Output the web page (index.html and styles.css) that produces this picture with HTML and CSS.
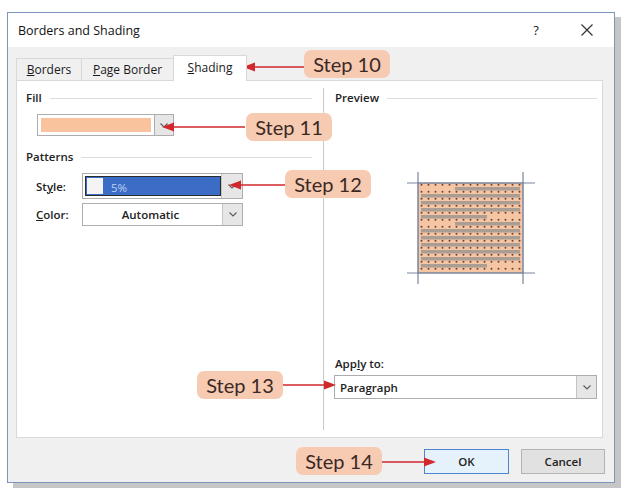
FILE: index.html
```html
<!DOCTYPE html>
<html>
<head>
<meta charset="utf-8">
<title>Borders and Shading</title>
<link rel="stylesheet" href="styles.css">
</head>
<body>
<div class="page">
  <div class="dialog">
    <div class="titlebar">
      <span class="title">Borders and Shading</span>
      <span class="help">?</span>
      <svg class="close" width="12" height="12" viewBox="0 0 12 12"><path d="M0.5 0.5 L11.5 11.5 M11.5 0.5 L0.5 11.5" stroke="#333" stroke-width="1.2" fill="none"/></svg>
    </div>
    <div class="body">
      <div class="tabs">
        <div class="tab tab-borders"><u>B</u>orders</div>
        <div class="tab tab-page"><u>P</u>age Border</div>
        <div class="tab tab-shading active"><u>S</u>hading</div>
      </div>
      <div class="panel">
        <div class="col left">
          <div class="group"><span class="glabel">Fill</span><i class="gline"></i></div>
          <div class="dd dd-fill">
            <div class="val"><span class="swatch"></span></div>
            <div class="btn"><svg width="8" height="5" viewBox="0 0 8 5"><polyline points="0.5,0.5 4,4 7.5,0.5" fill="none" stroke="#5a5a5a" stroke-width="1.1"/></svg></div>
          </div>
          <div class="group patterns"><span class="glabel">Patterns</span><i class="gline"></i></div>
          <div class="row row-style">
            <span class="lbl">St<u>y</u>le:</span>
            <div class="dd dd-style">
              <div class="val"><span class="sel"><span class="wsq"></span><span class="pct">5%</span></span></div>
              <div class="btn"><svg width="8" height="5" viewBox="0 0 8 5"><polyline points="0.5,0.5 4,4 7.5,0.5" fill="none" stroke="#5a5a5a" stroke-width="1.1"/></svg></div>
            </div>
          </div>
          <div class="row row-color">
            <span class="lbl"><u>C</u>olor:</span>
            <div class="dd dd-color">
              <div class="val center">Automatic</div>
              <div class="btn"><svg width="8" height="5" viewBox="0 0 8 5"><polyline points="0.5,0.5 4,4 7.5,0.5" fill="none" stroke="#5a5a5a" stroke-width="1.1"/></svg></div>
            </div>
          </div>
        </div>
        <div class="col right">
          <div class="group"><span class="glabel">Preview</span><i class="gline"></i></div>
          <div class="preview">
            <svg width="134" height="118" viewBox="0 0 134 118">
              <defs>
                <pattern id="dots" x="14" y="13" width="7" height="7" patternUnits="userSpaceOnUse">
                  <circle cx="3.5" cy="1.7" r="1" fill="#6a4238"/>
                </pattern>
              </defs>
              <rect x="14" y="13" width="105" height="90" fill="#f6c6a4"/>
              <rect x="14" y="13" width="105" height="90" fill="url(#dots)"/>
              <g fill="#a99d94">
                <rect x="51" y="17" width="65" height="3.5"/>
                <rect x="17" y="24" width="99" height="3.5"/>
                <rect x="17" y="31" width="99" height="3.5"/>
                <rect x="17" y="38" width="99" height="3.5"/>
                <rect x="17" y="45" width="66" height="3.5"/>
                <rect x="51" y="52" width="65" height="3.5"/>
                <rect x="17" y="59" width="99" height="3.5"/>
                <rect x="17" y="66" width="99" height="3.5"/>
                <rect x="17" y="73" width="99" height="3.5"/>
                <rect x="17" y="80" width="99" height="3.5"/>
                <rect x="17" y="87" width="99" height="3.5"/>
                <rect x="17" y="94" width="66" height="3.5"/>
              </g>
              <rect x="14" y="13" width="105" height="90" fill="none" stroke="#6f7f9b" stroke-width="1.4"/>
              <g stroke="#7a879e" stroke-width="1.2" fill="none">
                <path d="M14 2 V13 M119 2 V13 M14 103 V114 M119 103 V114"/>
                <path d="M3 13 H14 M119 13 H131 M3 103 H14 M119 103 H131"/>
              </g>
            </svg>
          </div>
          <div class="apply-label">App<u>l</u>y to:</div>
          <div class="dd dd-apply">
            <div class="val">Paragraph</div>
            <div class="btn"><svg width="8" height="5" viewBox="0 0 8 5"><polyline points="0.5,0.5 4,4 7.5,0.5" fill="none" stroke="#5a5a5a" stroke-width="1.1"/></svg></div>
          </div>
        </div>
      </div>
      <div class="footer">
        <button class="button ok">OK</button>
        <button class="button cancel">Cancel</button>
      </div>
    </div>
  </div>

  <svg class="arrows" width="638" height="495" viewBox="0 0 638 495">
    <g stroke="#d0282c" stroke-width="1.5" fill="none">
      <path d="M304 67 H252"/>
      <path d="M245 127 H172"/>
      <path d="M285 185 H239"/>
      <path d="M282 385 H326"/>
      <path d="M382 462 H426"/>
    </g>
    <g fill="#d0282c">
      <polygon points="243,67 255,62.5 255,71.5"/>
      <polygon points="162,127 174,122.5 174,131.5"/>
      <polygon points="229,185 241,180.5 241,189.5"/>
      <polygon points="336,385 324,380.5 324,389.5"/>
      <polygon points="436,462 424,457.5 424,466.5"/>
    </g>
  </svg>
  <div class="callout c10">Step 10</div>
  <div class="callout c11">Step 11</div>
  <div class="callout c12">Step 12</div>
  <div class="callout c13">Step 13</div>
  <div class="callout c14">Step 14</div>
</div>
</body>
</html>
```
FILE: styles.css
```css
* { box-sizing: border-box; margin: 0; padding: 0; }
html, body { width: 638px; height: 495px; background: #fff; overflow: hidden; }
body { font-family: "Open Sans", "Noto Sans", sans-serif; font-size: 12px; color: #1a1a1a; }
u { text-decoration: underline; text-underline-offset: 1px; }

.page { position: relative; width: 638px; height: 495px; padding: 12px 0 0 7px; }

.dialog {
  width: 608px; height: 471px;
  border: 1px solid #7d95bc;
  background: #f0f0f0;
  box-shadow: 6px 5px 0 #c6c6c6;
  display: flex; flex-direction: column;
}

.titlebar { height: 34px; background: #fff; display: flex; align-items: center; padding: 0 21px 0 10px; }
.title { flex: 1; font-size: 12.5px; color: #111; }
.help { width: 12px; text-align: center; font-size: 13px; color: #222; }
.close { margin-left: 39px; }

.body { flex: 1; display: flex; flex-direction: column; padding: 0 11px 0 8px; }

.tabs { height: 33px; display: flex; align-items: flex-end; }
.tab {
  height: 22px; border: 1px solid #d9d9d9; border-bottom: none;
  margin-right: -1px; display: flex; align-items: center; justify-content: center;
  font-size: 12px; color: #1a1a1a; background: #f0f0f0;
}
.tab-borders { width: 66px; }
.tab-page { width: 93px; }
.tab-shading { width: 74px; }
.tab.active { height: 26px; margin-bottom: -1px; background: #fff; position: relative; z-index: 1; padding-bottom: 2px; }

.panel {
  height: 358px; border: 1px solid #d9d9d9; background: #fff;
  display: grid; grid-template-columns: 306px 1fr;
}

.col { display: flex; flex-direction: column; }
.left { padding: 10px 11px 0 9px; }
.right { margin: 7px 0; border-left: 1px solid #c9c9c9; padding: 3px 5px 31px 11px; }

.group { display: flex; align-items: center; height: 14px; gap: 8px; }
.glabel { font-weight: 600; font-size: 11.5px; color: #222; line-height: 14px; }
.gline { flex: 1; border-top: 1px solid #dedede; }
.patterns { margin-top: 14px; }

.dd { display: flex; border: 1px solid #adadad; background: #fff; }
.dd .val { flex: 1; display: flex; align-items: center; font-weight: 600; font-size: 11.5px; color: #222; }
.dd .val.center { justify-content: center; }
.dd .btn { width: 20px; border-left: 1px solid #c4c4c4; background: #e6e6e6; display: flex; align-items: center; justify-content: center; }

.dd-fill { width: 137px; height: 22px; margin: 9px 0 0 11px; }
.dd-fill .val { padding: 3px; }
.swatch { flex: 1; height: 100%; background: #f8c39d; }
.dd-fill .btn { width: 19px; border-left: 1px solid #adadad; }

.row { display: flex; align-items: center; }
.lbl { width: 46px; margin-left: 10px; font-weight: 600; font-size: 11.5px; color: #222; }
.row-style { margin-top: 9px; }
.row-color { margin-top: 4px; }

.dd-style { width: 161px; height: 26px; }
.dd-style .val { padding: 2px 0 2px 2px; }
.sel { flex: 1; height: 100%; background: #3b6dc7; border: 1px solid #2b2b2b; display: flex; align-items: center; padding: 1px; }
.wsq { width: 16px; height: 100%; background: #f4f4f4; }
.pct { margin-left: 8px; color: #bcd2f3; font-weight: 400; font-size: 11.5px; padding-top: 3px; }
.dd-style .btn { width: 21px; }

.dd-color { width: 161px; height: 23px; }
.dd-color .val { padding-right: 4px; }

.preview { flex: 1; padding: 65px 0 0 69px; }
.apply-label { font-weight: 600; font-size: 11.5px; color: #222; line-height: 14px; margin-bottom: 4px; }
.dd-apply { width: 263px; height: 24px; margin-left: -1px; }
.dd-apply .val { padding-left: 5px; }

.footer { flex: 1; display: flex; justify-content: flex-end; align-items: flex-start; gap: 12px; padding-top: 11px; margin-right: -2px; }
.button { height: 25px; font-family: "Open Sans", "Noto Sans", sans-serif; font-size: 11.5px; font-weight: 600; color: #222; }
.ok { width: 85px; background: #e5f1fb; border: 1px solid #4d86cf; }
.cancel { width: 84px; background: #e1e1e1; border: 1px solid #b4b4b4; }

.arrows { position: absolute; left: 0; top: 0; pointer-events: none; }
.callout {
  position: absolute; width: 86px; height: 28px; border-radius: 7px;
  background: #f7cab2; color: #3a2824;
  font-family: Lato, "Open Sans", sans-serif; font-size: 20px;
  display: flex; align-items: center; justify-content: center; line-height: 1;
}
.c10 { left: 304px; top: 50px; }
.c11 { left: 246px; top: 113px; }
.c12 { left: 285px; top: 170px; }
.c13 { left: 197px; top: 371px; }
.c14 { left: 296px; top: 447px; }
```
